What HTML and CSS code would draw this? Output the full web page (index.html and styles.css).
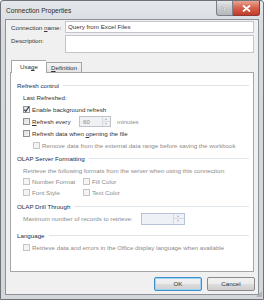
FILE: index.html
```html
<!DOCTYPE html>
<html lang="en">
<head>
    <meta charset="UTF-8">
    <meta name="viewport" content="width=device-width, initial-scale=1.0">
    <title>Connection Properties</title>
    <link rel="stylesheet" href="styles.css">
</head>
<body>
<div class="window">
    <div class="titlebar">
        <span class="title">Connection Properties</span>
        <div class="caption-buttons">
            <span class="cap-btn help">?</span>
            <span class="cap-btn close">
                <svg width="9" height="7" viewBox="0 0 9 7"><path d="M1 0.5 L8 6.5 M8 0.5 L1 6.5" stroke="#fff" stroke-width="1.8"/></svg>
            </span>
        </div>
    </div>

    <div class="client">
        <div class="field-row">
            <span class="field-label">Connection <u>n</u>ame:</span>
            <div class="textbox name-box">Query from Excel Files</div>
        </div>
        <div class="field-row desc-row">
            <span class="field-label">Description:</span>
            <div class="textbox desc-box"></div>
        </div>

        <div class="tabs">
            <span class="tab active">Usa<u>g</u>e</span>
            <span class="tab"><u>D</u>efinition</span>
        </div>

        <div class="tab-panel">
            <!-- Refresh control -->
            <div class="group">
                <div class="group-title">Refresh control</div>
                <div class="row"><span>Last Refreshed:</span></div>
                <div class="row">
                    <span class="check checked"><svg width="7" height="7" viewBox="0 0 7 7"><path d="M1.2 3.6 L2.8 5.4 L5.9 0.9" fill="none" stroke="#2a3a52" stroke-width="1.1"/></svg></span>
                    <span>Enable background refresh</span>
                </div>
                <div class="row">
                    <span class="check"></span>
                    <span class="every-label"><u>R</u>efresh every</span>
                    <div class="spinner minutes-spin">
                        <span class="spin-value">60</span>
                        <span class="spin-arrows"><i class="up"></i><i class="down"></i></span>
                    </div>
                    <span class="muted minutes">minutes</span>
                </div>
                <div class="row">
                    <span class="check"></span>
                    <span>Refresh data when <u>o</u>pening the file</span>
                </div>
                <div class="row sub muted">
                    <span class="check off"></span>
                    <span>Remove data from the external data range before saving the workbook</span>
                </div>
            </div>

            <!-- OLAP Server Formatting -->
            <div class="group olap">
                <div class="group-title">OLAP Server Formatting</div>
                <div class="row muted"><span>Retrieve the following formats from the server when using this connection:</span></div>
                <div class="format-grid muted">
                    <div class="cell"><span class="check off"></span><span>Number Format</span></div>
                    <div class="cell"><span class="check off"></span><span>Fill Color</span></div>
                    <div class="cell"><span class="check off"></span><span>Font Style</span></div>
                    <div class="cell"><span class="check off"></span><span>Text Color</span></div>
                </div>
            </div>

            <!-- OLAP Drill Through -->
            <div class="group drill">
                <div class="group-title">OLAP Drill Through</div>
                <div class="row max-row muted">
                    <span class="max-label">Maximum number of records to retrieve:</span>
                    <div class="spinner records-spin">
                        <span class="spin-value"></span>
                        <span class="spin-arrows"><i class="up"></i><i class="down"></i></span>
                    </div>
                </div>
            </div>

            <!-- Language -->
            <div class="group lang">
                <div class="group-title">Language</div>
                <div class="row muted">
                    <span class="check off"></span>
                    <span>Retrieve data and errors in the Office display language when available</span>
                </div>
            </div>
        </div>

        <div class="buttons">
            <span class="button default">OK</span>
            <span class="button">Cancel</span>
        </div>
    </div>
    <span class="grip"></span>
</div>
</body>
</html>
```

FILE: styles.css
```css
body {
    margin: 0;
    padding: 0;
    background-color: #fff;
    font-family: "Liberation Sans", Arial, sans-serif;
    font-size: 6.2px;
    color: #333;
}
u {
    text-decoration-thickness: 0.5px;
    text-underline-offset: 1px;
}

/* window frame */
.window {
    position: relative;
    width: 264px;
    height: 300px;
    box-sizing: border-box;
    border: 1px solid #6f7378;
    border-radius: 3px 3px 0 0;
    background: linear-gradient(#e4e7eb, #d6dadf 30px, #d3d7dc);
    padding: 0 4px 4px 4px;
    display: flex;
    flex-direction: column;
}
.titlebar {
    height: 18px;
    display: flex;
    justify-content: space-between;
    align-items: flex-start;
}
.title {
    margin: 6px 0 0 1px;
    font-size: 6.6px;
    color: #2a2a2a;
}
.caption-buttons {
    display: flex;
    margin-right: -1px;
}
.cap-btn {
    height: 15px;
    box-sizing: border-box;
    display: flex;
    align-items: center;
    justify-content: center;
    border: 1px solid #7d8187;
    border-top: none;
}
.help {
    width: 17px;
    border-radius: 0 0 0 3px;
    background: linear-gradient(#e6e7e9, #c9cbcf 50%, #b4b7bc);
    color: #fff;
    font-size: 8px;
    font-weight: bold;
    text-shadow: 0 0 1px #555;
}
.close {
    width: 27px;
    border-left: none;
    border-color: #8d3a33;
    border-radius: 0 0 3px 0;
    background: linear-gradient(#e8a493, #d4604c 50%, #c33b2a);
}

/* client area */
.client {
    flex: 1;
    background-color: #f0f0f0;
    border: 1px solid #8e9297;
    padding: 0 2px;
    display: flex;
    flex-direction: column;
}
.field-row {
    display: flex;
    align-items: center;
    margin-top: 1px;
}
.desc-row {
    margin-top: 2px;
    align-items: flex-start;
}
.field-label {
    width: 57px;
    padding-left: 3px;
    box-sizing: border-box;
}
.desc-row .field-label {
    padding-top: 2px;
}
.textbox {
    flex: 1;
    margin-right: 2px;
    background-color: #fff;
    border: 1px solid #c2c6cc;
    box-sizing: border-box;
}
.name-box {
    height: 12px;
    line-height: 10px;
    padding-left: 2px;
}
.desc-box {
    height: 18px;
}

/* tabs */
.tabs {
    display: flex;
    align-items: flex-end;
    margin: 7px 0 0 3px;
    height: 12px;
    position: relative;
    z-index: 1;
}
.tab {
    height: 10px;
    width: 36px;
    box-sizing: border-box;
    border: 1px solid #a3a6ab;
    border-bottom: none;
    background: linear-gradient(#f4f4f4, #e4e4e4);
    text-align: center;
    line-height: 9px;
}
.tab.active {
    height: 13px;
    width: 35px;
    margin-bottom: -1px;
    background: #fff;
    border-right: none;
    line-height: 12px;
}

.tab-panel {
    height: 200px;
    box-sizing: border-box;
    margin: 0 2px;
    border: 1px solid #a3a6ab;
    background-color: #fff;
    padding: 6px 4px 0 6px;
}
.group-title {
    height: 12px;
    display: flex;
    align-items: center;
    color: #1c2b4a;
}
.group-title::after {
    content: "";
    flex: 1;
    margin-left: 4px;
    border-top: 1px solid #dde4ea;
}
.olap {
    margin-top: 1px;
}
.drill {
    margin-top: 2px;
}
.lang {
    margin-top: 4px;
}
.row {
    height: 12px;
    display: flex;
    align-items: center;
    padding-left: 6px;
    white-space: nowrap;
}
.row.sub {
    padding-left: 16px;
}
.muted {
    color: #8b8b8b;
}

/* check boxes */
.check {
    width: 7px;
    height: 7px;
    box-sizing: border-box;
    border: 1px solid #8f9296;
    background: linear-gradient(135deg, #dcdcdc, #f6f6f6);
    margin-right: 2px;
    flex-shrink: 0;
    position: relative;
}
.check svg {
    position: absolute;
    left: -1px;
    top: -1px;
}
.check.off {
    border-color: #c3c5c8;
    background: #f4f4f4;
}

/* spinners */
.every-label {
    width: 47px;
}
.spinner {
    display: flex;
    height: 11px;
    box-sizing: border-box;
    border: 1px solid #bfc4cc;
    background-color: #f0f1f3;
}
.minutes-spin {
    width: 32px;
}
.spin-value {
    flex: 1;
    padding-left: 3px;
    line-height: 9px;
    color: #8b8b8b;
}
.spin-arrows {
    width: 7px;
    display: flex;
    flex-direction: column;
    border-left: 1px solid #d7d9dc;
}
.spin-arrows i {
    flex: 1;
    position: relative;
}
.spin-arrows .up {
    border-bottom: 1px solid #d7d9dc;
}
.spin-arrows i::after {
    content: "";
    position: absolute;
    left: 2px;
    top: 1px;
    border-left: 1.5px solid transparent;
    border-right: 1.5px solid transparent;
}
.spin-arrows .up::after {
    border-bottom: 2px solid #b0b3b7;
}
.spin-arrows .down::after {
    border-top: 2px solid #b0b3b7;
}
.minutes {
    margin-left: 6px;
}

.format-grid {
    display: grid;
    grid-template-columns: 60px 60px;
    padding-left: 6px;
}
.format-grid .cell {
    height: 11px;
    display: flex;
    align-items: center;
}
.max-row {
    height: 13px;
}
.max-label {
    width: 118px;
}
.records-spin {
    width: 44px;
    height: 12px;
    border-color: #b5c3d6;
    background-color: #eef1f5;
}
.records-spin .spin-arrows {
    width: 10px;
}
.records-spin .spin-arrows i::after {
    left: 3px;
}

/* dialog buttons */
.buttons {
    display: flex;
    justify-content: flex-end;
    gap: 5px;
    margin-top: 5px;
    padding-right: 1px;
}
.button {
    width: 48px;
    height: 14px;
    box-sizing: border-box;
    border: 1px solid #8a8a8a;
    border-radius: 2px;
    background: linear-gradient(#f2f2f2, #ebebeb 50%, #dddddd 51%, #cfcfcf);
    text-align: center;
    line-height: 12px;
}
.button.default {
    border-color: #3c8fc8;
    box-shadow: inset 0 0 0 1px #9fd3f3;
}

/* size grip */
.grip {
    position: absolute;
    right: 1px;
    bottom: 2px;
    width: 6px;
    height: 6px;
    background: radial-gradient(circle, #8a8d92 0.6px, transparent 0.8px) 0 0 / 2px 2px;
    clip-path: polygon(100% 0, 100% 100%, 0 100%);
}
```
